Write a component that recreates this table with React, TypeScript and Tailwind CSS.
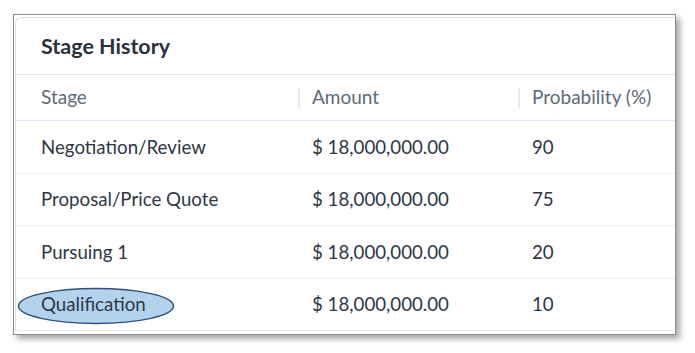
import React from "react";

const rows = [
  { stage: "Negotiation/Review", amount: "$ 18,000,000.00", prob: "90", h: "h-[53px]" },
  { stage: "Proposal/Price Quote", amount: "$ 18,000,000.00", prob: "75", h: "h-[52px]" },
  { stage: "Pursuing 1", amount: "$ 18,000,000.00", prob: "20", h: "h-[53px]" },
  { stage: "Qualification", amount: "$ 18,000,000.00", prob: "10", h: "h-[52px]", mark: true },
];

export default function App() {
  return (
    <div
      className="w-[695px] h-[353px] bg-white pt-[14px] pl-[13px]"
      style={{ fontFamily: "Lato, 'Open Sans', sans-serif" }}
    >
      <div className="w-[663px] h-[321px] border border-[#8c8c8c] bg-white overflow-hidden shadow-[4px_4px_6px_rgba(0,0,0,0.35)]">
        <div className="ml-[1px] mt-[2px] w-[700px] border-l border-t border-[#d3e2ef] rounded-tl-[6px]">
          <div className="h-[57px] flex items-center pl-[25px] border-b border-[#dbe7f2]">
            <span className="text-[21.5px] font-bold text-[#2a303c]">Stage History</span>
          </div>
          <div className="h-[46px] flex items-center border-b border-[#dbe7f2] text-[19px] text-[#5e6a7a]">
            <div className="w-[282px] pl-[25px]">Stage</div>
            <div className="w-[220px] flex items-center">
              <div className="w-[2px] h-[20px] bg-[#e3ecf4]" />
              <span className="pl-[12px]">Amount</span>
            </div>
            <div className="flex items-center">
              <div className="w-[2px] h-[20px] bg-[#e3ecf4]" />
              <span className="pl-[12px]">Probability (%)</span>
            </div>
          </div>
          {rows.map((r) => (
            <div
              key={r.stage}
              className={`${r.h} flex items-center border-b border-[#e8f0f7] text-[18.7px] text-[#2e3746]`}
            >
              <div className="w-[282px] pl-[25px] relative h-full flex items-center">
                {r.mark && (
                  <svg
                    className="absolute left-[1px] top-[8px]"
                    width="158"
                    height="38"
                    viewBox="0 0 158 38"
                  >
                    <ellipse cx="79" cy="19" rx="77.5" ry="17.5" fill="#b3d2ec" stroke="#2f4f86" strokeWidth="1.5" />
                  </svg>
                )}
                <span className="relative">{r.stage}</span>
              </div>
              <div className="w-[220px] pl-[14px]">{r.amount}</div>
              <div className="pl-[14px]">{r.prob}</div>
            </div>
          ))}
        </div>
      </div>
    </div>
  );
}
